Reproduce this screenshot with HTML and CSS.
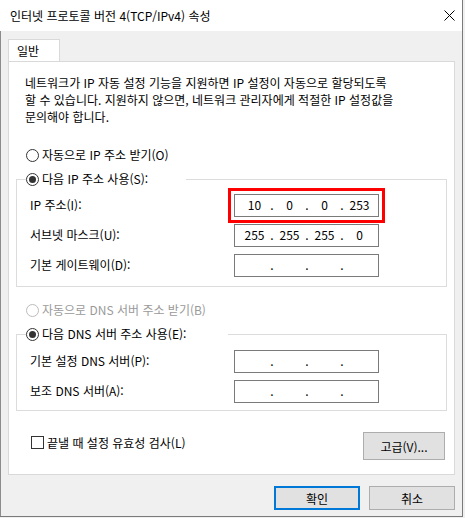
FILE: index.html
```html
<!DOCTYPE html>
<html lang="ko">
<head>
    <meta charset="UTF-8">
    <title>인터넷 프로토콜 버전 4(TCP/IPv4) 속성</title>
    <link rel="stylesheet" href="styles.css">
</head>
<body>
    <div class="window">
        <!-- Title bar -->
        <div class="titlebar">
            <span class="title">인터넷 프로토콜 버전 4(TCP/IPv4) 속성</span>
            <svg class="close" width="11" height="11" viewBox="0 0 11 11">
                <path d="M0.5 0.5 L10.5 10.5 M10.5 0.5 L0.5 10.5" stroke="#000" stroke-width="1" fill="none"/>
            </svg>
        </div>

        <div class="body">
            <div class="tabs">
                <div class="tab">일반</div>
            </div>

            <div class="panel">
                <p class="desc">
                    네트워크가 IP 자동 설정 기능을 지원하면 IP 설정이 자동으로 할당되도록<br>
                    할 수 있습니다. 지원하지 않으면, 네트워크 관리자에게 적절한 IP 설정값을<br>
                    문의해야 합니다.
                </p>

                <!-- IP section -->
                <div class="radio radio-first"><span class="mark"></span>자동으로 IP 주소 받기(O)</div>
                <fieldset class="group">
                    <legend class="radio legend-ip"><span class="mark on"></span>다음 IP 주소 사용(S):</legend>
                    <div class="rows rows-ip">
                        <span class="lbl">IP 주소(I):</span>
                        <div class="ip-field highlight">
                            <span>10</span><span class="sep">.</span><span>0</span><span class="sep">.</span><span>0</span><span class="sep">.</span><span>253</span>
                        </div>
                        <span class="lbl">서브넷 마스크(U):</span>
                        <div class="ip-field">
                            <span>255</span><span class="sep">.</span><span>255</span><span class="sep">.</span><span>255</span><span class="sep">.</span><span>0</span>
                        </div>
                        <span class="lbl">기본 게이트웨이(D):</span>
                        <div class="ip-field">
                            <span></span><span class="sep">.</span><span></span><span class="sep">.</span><span></span><span class="sep">.</span><span></span>
                        </div>
                    </div>
                </fieldset>

                <!-- DNS section -->
                <div class="radio radio-dns disabled"><span class="mark"></span>자동으로 DNS 서버 주소 받기(B)</div>
                <fieldset class="group">
                    <legend class="radio legend-dns"><span class="mark on"></span>다음 DNS 서버 주소 사용(E):</legend>
                    <div class="rows rows-dns">
                        <span class="lbl">기본 설정 DNS 서버(P):</span>
                        <div class="ip-field">
                            <span></span><span class="sep">.</span><span></span><span class="sep">.</span><span></span><span class="sep">.</span><span></span>
                        </div>
                        <span class="lbl">보조 DNS 서버(A):</span>
                        <div class="ip-field">
                            <span></span><span class="sep">.</span><span></span><span class="sep">.</span><span></span><span class="sep">.</span><span></span>
                        </div>
                    </div>
                </fieldset>

                <div class="bottom-row">
                    <div class="check"><span class="box"></span>끝낼 때 설정 유효성 검사(L)</div>
                    <div class="btn btn-adv">고급(V)...</div>
                </div>
            </div>

            <div class="footer">
                <div class="btn btn-primary">확인</div>
                <div class="btn">취소</div>
            </div>
        </div>
    </div>
</body>
</html>
```

FILE: styles.css
```css
html, body {
    margin: 0;
    padding: 0;
}
body {
    font-family: "Noto Sans CJK KR", "Noto Sans", sans-serif;
    font-size: 12px;
    line-height: 17px;
    color: #000;
    background: #f0f0f0;
}
.window {
    width: 462px;
    height: 516px;
    border-right: 1px solid #7a7a7a;
    border-bottom: 1px solid #7a7a7a;
    background: #f0f0f0;
}
.titlebar {
    height: 31px;
    background: #fff;
    display: flex;
    align-items: center;
    justify-content: space-between;
    padding: 0 7px 0 10px;
}
.title {
    padding-bottom: 1px;
}
.close {
    display: block;
    margin-bottom: 1px;
}
.body {
    height: 485px;
    box-sizing: border-box;
    border-left: 1px solid #8c8c8c;
    padding: 8px 7px 0 7px;
}

/* tab strip */
.tabs {
    display: flex;
    height: 22px;
}
.tab {
    width: 52px;
    height: 22px;
    box-sizing: border-box;
    padding-left: 8px;
    line-height: 22px;
    border: 1px solid #d9d9d9;
    border-bottom: none;
    background: #fff;
    position: relative;
    z-index: 1;
}
.panel {
    background: #fff;
    border: 1px solid #d9d9d9;
    padding: 12px 7px 13px 7px;
    height: 414px;
    box-sizing: border-box;
}
.desc {
    margin: 0 0 0 9px;
    line-height: 17px;
}

/* radio buttons */
.radio {
    display: flex;
    align-items: center;
    gap: 3px;
    height: 18px;
    line-height: 18px;
}
.radio-first {
    margin: 21px 0 0 10px;
}
.radio-dns {
    margin: 14px 0 0 10px;
}
.radio.disabled {
    color: #9a9a9a;
}
.mark {
    width: 13px;
    height: 13px;
    box-sizing: border-box;
    border: 1px solid #333;
    border-radius: 50%;
    background: #fff;
    display: flex;
    align-items: center;
    justify-content: center;
    flex-shrink: 0;
}
.mark.on::after {
    content: '';
    width: 7px;
    height: 7px;
    border-radius: 50%;
    background: #333;
}
.disabled .mark {
    border-color: #bcbcbc;
}

/* group boxes */
.group {
    margin: 6px 0 0 0;
    padding: 0;
    border: 1px solid #dcdcdc;
    min-inline-size: 0;
}
.group legend {
    padding: 0;
    margin-left: 9px;
    box-sizing: border-box;
}
.legend-ip {
    width: 160px;
}
.legend-dns {
    width: 202px;
}
.rows {
    display: grid;
    grid-template-columns: 204px 145px;
    row-gap: 7px;
    align-items: center;
    padding: 6px 0 9px 13px;
}
.rows-dns {
    padding: 7px 0 7px 13px;
}
.lbl {
    line-height: 18px;
    padding-bottom: 1px;
}

/* ip address control */
.ip-field {
    height: 23px;
    box-sizing: border-box;
    border: 1px solid #7a7a7a;
    background: #fff;
    display: grid;
    grid-template-columns: 31px 4px 31px 4px 31px 4px 31px;
    padding-left: 4px;
    line-height: 20px;
    text-align: center;
}
.ip-field .sep {
    display: flex;
    justify-content: center;
}
.highlight {
    outline: 3px solid #f00;
    outline-offset: 3px;
}

/* bottom of the panel */
.bottom-row {
    display: flex;
    justify-content: space-between;
    align-items: flex-start;
    margin-top: 21px;
    padding-left: 15px;
}
.check {
    display: flex;
    align-items: center;
    gap: 3px;
    height: 18px;
    margin-top: 1px;
}
.box {
    width: 13px;
    height: 13px;
    box-sizing: border-box;
    border: 1px solid #333;
    background: #fff;
}
.btn {
    width: 86px;
    height: 24px;
    box-sizing: border-box;
    border: 1px solid #adadad;
    background: #e1e1e1;
    display: flex;
    align-items: center;
    justify-content: center;
}
.btn-adv {
    width: 82px;
    height: 28px;
    margin-right: 2px;
}
.btn-primary {
    border: 2px solid #0078d7;
}
.footer {
    display: flex;
    justify-content: flex-end;
    gap: 9px;
    padding: 11px 0 0 0;
}
```
